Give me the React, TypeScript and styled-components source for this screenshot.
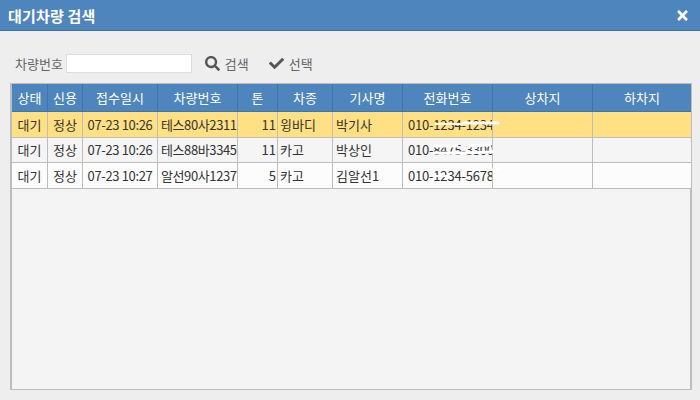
import React from "react";
import styled, { createGlobalStyle } from "styled-components";
import { FaSearch, FaCheck, FaTimes } from "react-icons/fa";

const GlobalStyle = createGlobalStyle`
  html, body {
    margin: 0;
    padding: 0;
    background: #eeeeee;
  }
  body {
    font-family: "Noto Sans CJK KR", "Liberation Sans", sans-serif;
  }
`;

const Dialog = styled.div`
  width: 700px;
  height: 400px;
  display: flex;
  flex-direction: column;
  overflow: hidden;
  background: #eeeeee;
`;

const TitleBar = styled.header`
  height: 31px;
  box-sizing: border-box;
  flex: none;
  display: flex;
  align-items: center;
  justify-content: space-between;
  padding: 0 10px 0 8px;
  background: #4f85bd;
  border-bottom: 1px solid #3f74ac;
  color: #fff;
`;

const Title = styled.h1`
  margin: 0;
  font-size: 15px;
  font-weight: 700;
  letter-spacing: 0.2px;
`;

const CloseIcon = styled(FaTimes)`
  width: 15px;
  height: 15px;
  color: #fff;
`;

const Toolbar = styled.div`
  height: 52px;
  flex: none;
  display: flex;
  align-items: center;
  padding: 13px 0 0 15px;
  box-sizing: border-box;
  font-size: 13px;
  color: #666;
`;

const Label = styled.label`
  margin-right: 3px;
`;

const SearchInput = styled.input`
  width: 126px;
  height: 19px;
  padding: 0;
  box-sizing: border-box;
  border: 1px solid #dddddd;
  background: #fff;
  margin-right: 13px;
`;

const ToolButton = styled.button<{ $gap: number }>`
  display: flex;
  align-items: center;
  gap: 5px;
  padding: 0;
  border: 0;
  background: none;
  font: inherit;
  color: #666;
  margin-right: ${(p) => p.$gap}px;
  svg {
    color: #555;
    width: 15px;
    height: 15px;
  }
`;

const GridFrame = styled.div`
  position: relative;
  width: 682px;
  height: 307px;
  margin-left: 10px;
  box-sizing: border-box;
  background: #f4f4f4;
  border: 1px solid #bdbdbd;
  border-left-width: 2px;
  border-right-width: 2px;
`;

const Table = styled.table`
  width: 679px;
  table-layout: fixed;
  border-collapse: separate;
  border-spacing: 0;
  font-size: 13px;
  line-height: 16px;
`;

const HeadCell = styled.th`
  height: 28px;
  padding: 0;
  box-sizing: border-box;
  background: #4f85bd;
  color: #fff;
  font-weight: 400;
  text-align: center;
  border-right: 1px solid #3f74ac;
  border-bottom: 1px solid #3f74ac;
  border-top: 0;
  &:last-child {
    border-right: 0;
  }
`;

const Row = styled.tr<{ $bg: string; $h: number }>`
  height: ${(p) => p.$h}px;
  background: ${(p) => p.$bg};
`;

const Cell = styled.td<{ $align?: string }>`
  padding: 0 3px;
  box-sizing: border-box;
  color: #333;
  white-space: nowrap;
  overflow: hidden;
  text-align: ${(p) => p.$align || "left"};
  border-right: 1px solid #bdbdbd;
  border-bottom: 1px solid #bdbdbd;
  &:last-child {
    border-right: 0;
  }
`;

const TimeCell = styled(Cell)`
  letter-spacing: -0.35px;
`;

const PlateCell = styled(Cell)`
  padding: 0 0 0 3px;
  letter-spacing: -0.4px;
`;

const TonCell = styled(Cell)`
  padding-right: 1px;
  text-align: right;
`;

const KindCell = styled(Cell)`
  padding-left: 2px;
`;

const PhoneCell = styled(Cell)`
  padding-left: 5px;
  letter-spacing: -0.2px;
`;

const Scribble = styled.svg`
  position: absolute;
  left: 0;
  top: 0;
  pointer-events: none;
`;

const widths = [36, 35, 75, 80, 40, 55, 70, 90, 100, 98];
const heads = ["상태", "신용", "접수일시", "차량번호", "톤", "차종", "기사명", "전화번호", "상차지", "하차지"];

const rows = [
  { bg: "#ffe082", h: 26, time: "07-23 10:26", no: "테스80사2311", ton: 11, kind: "윙바디", driver: "박기사", tel: "010-1234-1234" },
  { bg: "#f5f5f5", h: 25, time: "07-23 10:26", no: "테스88바3345", ton: 11, kind: "카고", driver: "박상인", tel: "010-8475-3300" },
  { bg: "#fcfcfc", h: 26, time: "07-23 10:27", no: "알선90사1237", ton: 5, kind: "카고", driver: "김알선1", tel: "010-1234-5678" },
];

export default function App() {
  return (
    <Dialog>
      <GlobalStyle />
      <TitleBar>
        <Title>대기차량 검색</Title>
        <CloseIcon />
      </TitleBar>
      <Toolbar>
        <Label>차량번호</Label>
        <SearchInput />
        <ToolButton $gap={20}>
          <FaSearch />
          검색
        </ToolButton>
        <ToolButton $gap={0}>
          <FaCheck />
          선택
        </ToolButton>
      </Toolbar>
      <GridFrame>
        <Table>
          <colgroup>
            {widths.map((w, i) => (
              <col key={i} width={w} />
            ))}
          </colgroup>
          <thead>
            <tr>
              {heads.map((h) => (
                <HeadCell key={h}>{h}</HeadCell>
              ))}
            </tr>
          </thead>
          <tbody>
            {rows.map((r) => (
              <Row key={r.no} $bg={r.bg} $h={r.h}>
                <Cell $align="center">대기</Cell>
                <Cell $align="center">정상</Cell>
                <TimeCell $align="center">{r.time}</TimeCell>
                <PlateCell>{r.no}</PlateCell>
                <TonCell>{r.ton}</TonCell>
                <KindCell>{r.kind}</KindCell>
                <Cell>{r.driver}</Cell>
                <PhoneCell>{r.tel}</PhoneCell>
                <Cell />
                <Cell />
              </Row>
            ))}
          </tbody>
        </Table>
        {/* white marker strokes over the phone numbers */}
        <Scribble width="678" height="120" fill="none" stroke="#fff" strokeLinecap="round">
          <path d="M424 40 L450 40" strokeWidth="2" />
          <path d="M452 39 L486 39" strokeWidth="3" />
          <path d="M422 69 L450 69 L481 68" strokeWidth="3" />
          <path d="M422 62 L445 62 M456 62 L478 61" strokeWidth="3" />
          <path d="M442 86 L470 86 L488 85" strokeWidth="2" />
          <path d="M424 92 L436 92" strokeWidth="2" />
        </Scribble>
      </GridFrame>
    </Dialog>
  );
}
